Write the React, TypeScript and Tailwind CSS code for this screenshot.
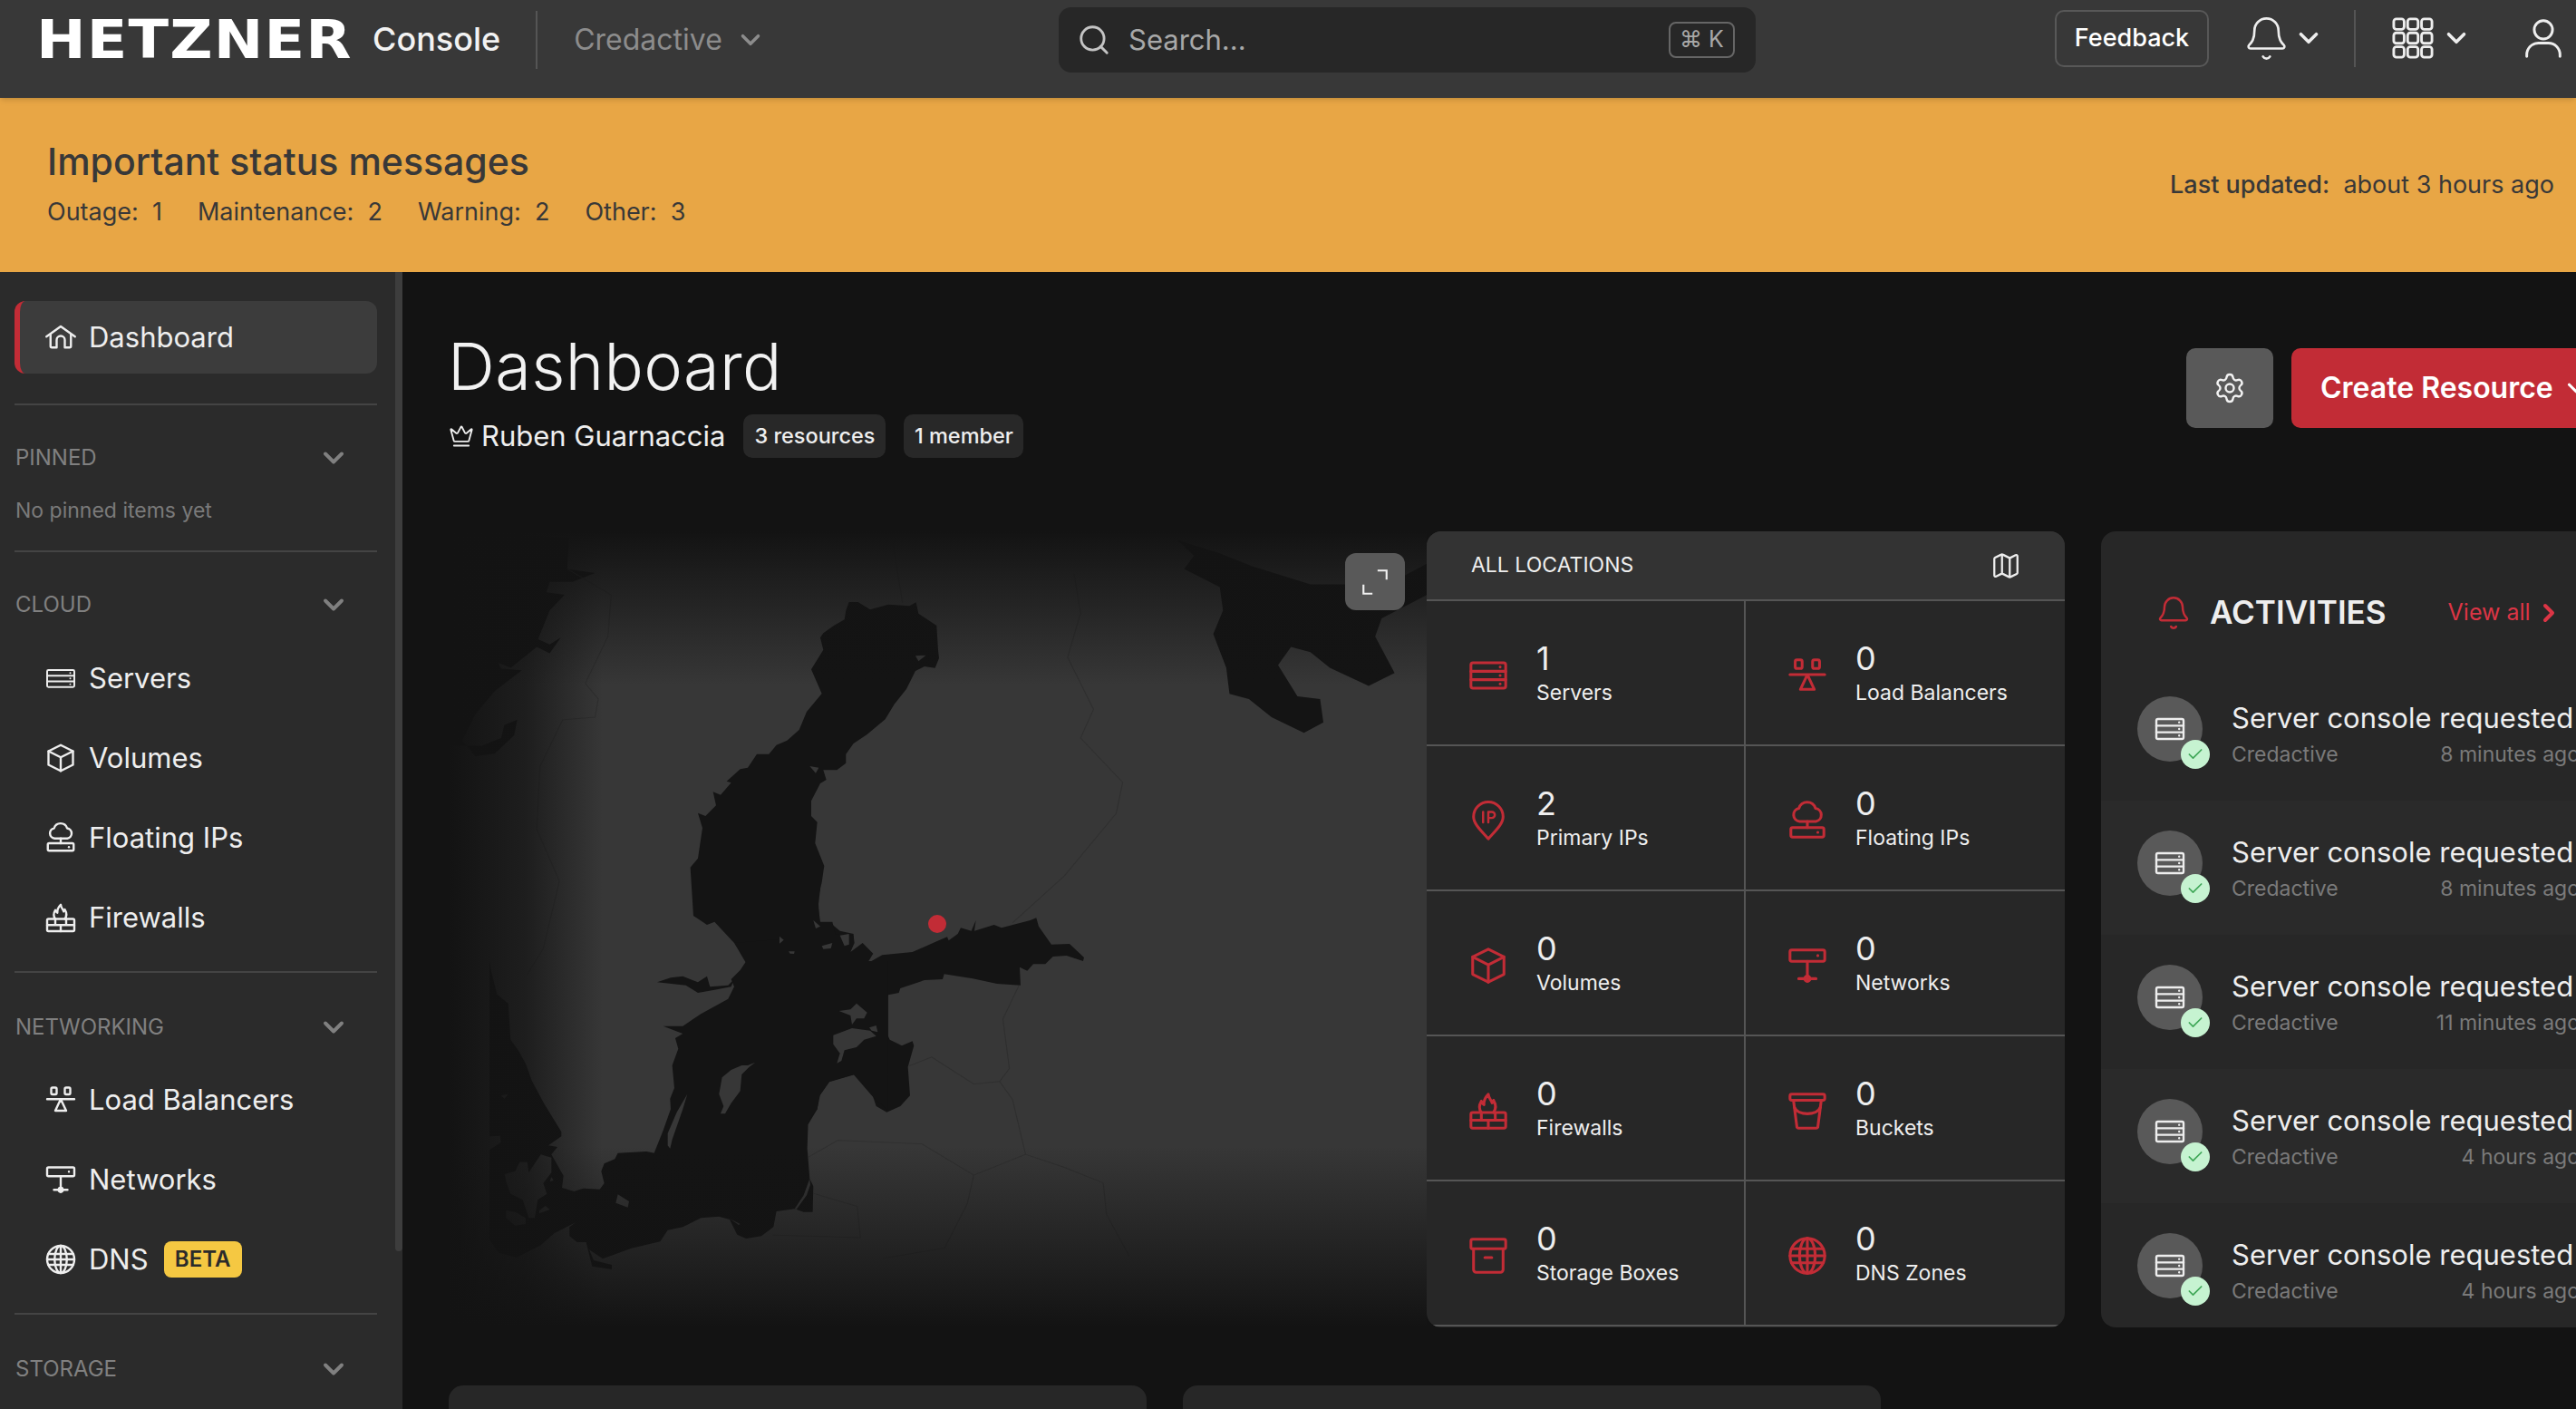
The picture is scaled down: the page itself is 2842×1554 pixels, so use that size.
import { Bell, Check, ChevronDown, ChevronRight, Crown, Map as MapIcon, Search, Settings } from "lucide-react";

type IconProps = { className?: string };

const strokeProps = {
  viewBox: "0 0 24 24",
  fill: "none",
  stroke: "currentColor",
  strokeWidth: 1.6,
  strokeLinecap: "round" as const,
  strokeLinejoin: "round" as const,
};

function ServerIcon({ className }: IconProps) {
  return (
    <svg {...strokeProps} className={className}>
      <rect x="2" y="4.700" width="20" height="14.600" rx="1.200" />
      <path d="M2 9.600h20M2 14.400h20M18.800 7.100h.01M18.800 12h.01M18.800 16.800h.01" />
    </svg>
  );
}

function WideServerIcon({ className }: IconProps) {
  return (
    <svg {...strokeProps} strokeWidth={1.3} className={className}>
      <rect x="2" y="6" width="20" height="12.500" rx="1" />
      <path d="M2 10.200h20M2 14.300h20M19 8.100h.01M19 12.200h.01M19 16.400h.01" />
    </svg>
  );
}

function BoxIcon({ className }: IconProps) {
  return (
    <svg {...strokeProps} className={className}>
      <path d="M12 2.500 21 7v10l-9 4.500L3 17V7z" />
      <path d="M3 7l9 4.500L21 7M12 11.500v10" />
    </svg>
  );
}

function FloatingIcon({ className }: IconProps) {
  return (
    <svg {...strokeProps} className={className}>
      <path d="M7.500 12.500a3.800 3.800 0 0 1-.4-7.500 5 5 0 0 1 9.600 0 3.800 3.800 0 0 1 .2 7.500z" />
      <path d="M12 12.500v3.500" />
      <rect x="2.500" y="16" width="19" height="5.500" rx="1" />
      <path d="M18 18.800h.01" />
    </svg>
  );
}

function FirewallIcon({ className }: IconProps) {
  return (
    <svg {...strokeProps} className={className}>
      <rect x="2" y="13" width="20" height="9" rx="1" />
      <path d="M2 17.500h20M8 13v4.500M16 13v4.500M12 17.500V22" />
      <path d="M8 13c-1.500-2-1.500-4 0-6.500.3 1 .8 1.700 1.500 2C9.300 6 10.500 4 12 2.500c.2 2.500 1.500 3 2.200 5 .3-.5.6-1 .8-1.500 1.500 2.500 1.500 5 0 7" />
    </svg>
  );
}

function BalancerIcon({ className }: IconProps) {
  return (
    <svg {...strokeProps} className={className}>
      <rect x="5" y="3" width="4" height="5" rx="1" />
      <rect x="15" y="3" width="4" height="5" rx="1" />
      <path d="M2 11.500h20M12 11.500l-4 8.500h8z" />
    </svg>
  );
}

function NetworkIcon({ className }: IconProps) {
  return (
    <svg {...strokeProps} className={className}>
      <rect x="2" y="3" width="20" height="6.500" rx="1" />
      <path d="M18 6.200h.01M12 9.500V21M7 19.500h3.500M13.500 19.500H17" />
      <circle cx="12" cy="19.500" r="1.500" />
    </svg>
  );
}

function GlobeGridIcon({ className }: IconProps) {
  return (
    <svg {...strokeProps} className={className}>
      <circle cx="12" cy="12" r="10" />
      <ellipse cx="12" cy="12" rx="4.500" ry="10" />
      <path d="M12 2v20M2.800 8h18.400M2 12h20M2.800 16h18.400" />
    </svg>
  );
}

function PinIpIcon({ className }: IconProps) {
  return (
    <svg {...strokeProps} className={className}>
      <path d="M12 22.500C8 18 3.500 14 3.500 9.800a8.500 8.500 0 0 1 17 0C20.500 14 16 18 12 22.500z" />
      <path d="M9 7v6M12 13V7h2a1.700 1.700 0 0 1 0 3.500h-2" strokeWidth="1.300" />
    </svg>
  );
}

function BucketIcon({ className }: IconProps) {
  return (
    <svg {...strokeProps} className={className}>
      <rect x="2" y="2.500" width="20" height="3.500" rx="1" />
      <path d="M4 6l2 15.500a1 1 0 0 0 1 .500h10a1 1 0 0 0 1-.500L20 6" />
      <path d="M4.500 10c2 5 13 5 15 0" />
    </svg>
  );
}

function ArchiveIcon({ className }: IconProps) {
  return (
    <svg {...strokeProps} className={className}>
      <rect x="2" y="2.500" width="20" height="5.500" rx="1" />
      <path d="M3.500 8v12a1.500 1.500 0 0 0 1.500 1.500h14a1.500 1.500 0 0 0 1.500-1.500V8M10 13h4" />
    </svg>
  );
}

function HouseIcon({ className }: IconProps) {
  return (
    <svg {...strokeProps} className={className}>
      <path d="M1.500 11.500 12 4l10.500 7.500" />
      <path d="M4.500 10v8.500a1 1 0 0 0 1 1h3.500V14a3 3 0 0 1 6 0v5.500h3.500a1 1 0 0 0 1-1V10" />
    </svg>
  );
}

function ExpandIcon({ className }: IconProps) {
  return (
    <svg viewBox="0 0 24 24" fill="none" stroke="currentColor" strokeWidth="1.500" className={className}>
      <path d="M14 3h7v7M3 14v7h7" />
    </svg>
  );
}

function AppsIcon({ className }: IconProps) {
  const cells = [1, 9, 17].flatMap((y) => [1, 9, 17].map((x) => ({ x, y })));
  return (
    <svg viewBox="0 0 24 24" fill="none" stroke="currentColor" strokeWidth="1.500" className={className}>
      {cells.map((c) => (
        <rect key={`${c.x}-${c.y}`} x={c.x} y={c.y} width="6" height="6" rx="1.500" />
      ))}
    </svg>
  );
}

function UserIcon({ className }: IconProps) {
  return (
    <svg {...strokeProps} className={className}>
      <circle cx="12" cy="7" r="5.500" />
      <path d="M2 23v-1a7 7 0 0 1 7-7h6a7 7 0 0 1 7 7v1" />
    </svg>
  );
}

// Baltic sea and coastlines, traced by hand in pieces, each group in its own traced scale
function BalticMap() {
  const north = "translate(720 640) scale(0.3333)";
  const gulf = "translate(860 980) scale(0.3333)";
  const south = "translate(540 1060) scale(0.3333)";
  const rough = "translate(460 570) scale(0.7143 0.574)";
  return (
    <svg viewBox="495 586 1079 878" className="h-full w-full">
      <g fill="#141414">
        <path transform={north} d="M640,100 650,72 680,72 720,97 780,80 850,85 872,73 880,110 940,150 945,230 948,258 935,290 900,285 870,300 840,360 800,410 770,460 710,510 665,540 640,575 640,605 610,628 565,628 575,660 555,672 525,730 525,780 545,800 538,870 568,945 560,1000 548,1050 552,1130 590,1135 620,1160 665,1170 665,1200 270,1200 205,1130 180,1140 135,1110 125,950 150,920 165,820 150,770 175,780 210,745 200,700 225,710 260,670 245,665 290,625 315,620 345,575 385,575 410,545 445,530 485,495 510,435 560,375 525,295 565,230 555,190 565,175 600,150 635,130 Z" />
        <path d="M810,1040 823,1062 870,1062 870,1035 Z" />
        <path transform={gulf} d="M0,0 135,0 128,60 135,110 175,110 185,150 245,155 248,180 235,210 275,180 310,215 290,248 340,220 440,210 520,175 555,160 560,172 590,150 600,130 635,140 650,105 645,140 710,120 735,130 830,105 850,97 858,125 900,185 960,183 1008,228 1005,240 950,222 905,225 880,250 840,250 820,272 795,260 798,320 720,315 640,298 545,283 540,300 480,303 400,330 395,345 345,355 335,400 350,435 345,455 365,500 405,520 440,505 445,520 425,590 432,685 400,720 355,740 320,720 305,675 250,615 165,640 130,690 125,730 95,780 0,780 Z" />
        <path transform={south} d="M850,0 1320,0 1320,495 1270,450 1205,375 1125,398 1095,440 1085,490 1055,530 1052,620 1060,720 1072,745 1070,830 1040,830 1010,820 950,828 940,880 900,910 850,918 820,905 795,855 760,845 700,850 640,880 590,890 565,928 470,950 375,985 330,955 345,990 405,1005 405,1020 340,1010 320,930 290,930 265,910 265,880 285,865 215,900 170,940 90,980 30,965 0,920 0,0 5,30 25,110 62,140 70,260 95,295 120,340 140,395 180,470 238,565 238,580 195,610 225,615 205,640 245,710 240,750 280,762 310,752 365,755 380,735 370,695 380,670 415,655 425,635 520,630 545,635 575,560 600,490 598,455 612,420 605,345 625,290 615,255 640,240 575,215 640,215 700,175 790,125 810,85 800,60 830,30 Z" />
        <path transform={south} d="M555,70 600,55 640,50 690,70 720,50 730,85 790,80 810,60 800,85 745,95 690,105 650,80 Z" />
        <path transform={rough} d="M49,28 L235,40 232,100 275,108 240,125 205,125 200,145 228,150 205,180 187,235 205,245 222,232 205,262 185,250 165,270 145,290 125,280 130,292 162,295 120,335 90,380 70,430 90,460 120,455 150,420 155,390 135,400 130,425 100,440 60,440 49,440 Z" />
        <path transform={rough} d="M1175,45 L1200,75 1185,100 1240,135 1245,180 1230,225 1250,290 1255,340 1285,350 1320,385 1370,415 1400,395 1395,350 1360,345 1330,285 1350,250 1380,260 1410,290 1470,325 1510,300 1480,230 1490,195 1560,150 1560,90 1500,130 1380,130 1290,95 1240,70 Z" />
      </g>
      <g fill="#373737">
        <path transform={north} d="M870,250 905,248 880,268 Z" />
        <path transform={north} d="M520,615 550,620 540,638 Z" />
        <path transform={gulf} d="M178,485 240,462 300,470 320,488 280,500 255,525 215,535 205,570 190,578 200,545 178,515 Z" />
        <path transform={gulf} d="M197,405 235,400 255,380 290,410 280,430 255,430 240,450 235,420 Z" />
        <path transform={gulf} d="M297,460 320,453 325,475 305,470 Z" />
        <path transform={gulf} d="M112,105 135,125 120,132 Z" />
        <path transform={gulf} d="M200,155 230,150 230,185 215,190 Z" />
        <path transform={gulf} d="M140,190 175,180 170,198 145,200 Z" />
        <path transform={gulf} d="M30,208 50,208 48,216 35,215 Z" />
        <path transform={gulf} d="M0,158 14,170 0,182 Z" />
        <path transform={south} d="M835,345 855,345 880,335 860,350 835,375 830,430 800,470 780,505 765,505 775,480 760,440 770,385 800,360 Z" />
        <path transform={south} d="M655,440 640,490 605,590 598,620 590,610 590,570 620,500 Z" />
        <path transform={south} d="M425,772 462,795 458,815 418,800 Z" />
        <path transform={south} d="M50,705 85,695 100,665 125,665 130,700 170,640 205,650 205,700 178,735 190,770 160,790 150,850 130,850 110,790 70,770 55,730 Z" />
        <path transform={south} d="M0,580 35,578 38,600 0,625 Z" />
        <path transform={south} d="M55,825 85,830 120,850 120,870 85,875 55,850 Z" />
        <path transform={south} d="M165,825 185,810 200,822 165,835 Z" />
        <path transform={south} d="M205,715 212,725 200,730 Z" />
        <path transform={south} d="M38,445 62,440 50,455 Z" />
        <path transform={south} d="M1060,720 1040,775 1010,820 1016,822 1050,775 1062,740 Z" />
        <path transform={south} d="M795,852 830,870 825,873 Z" />
      </g>
      <g fill="none" stroke="#2f2f2f" strokeWidth="1.500" transform={rough}>
        <path d="M232,100 L300,150 295,230 260,320 280,350 275,385 225,390 190,480 185,600 220,700 195,830 170,880" />
        <path d="M735,50 L750,165" />
        <path d="M1015,110 L1025,185 1005,270 1045,370 1025,425 1090,510 1080,570 1000,690 920,780" />
        <path d="M760,1055 L795,1038 860,1090 900,1085" />
        <path d="M930,900 L905,965 915,1060 900,1085 920,1120 940,1225" />
        <path d="M605,1230 L650,1198 780,1205 860,1265 940,1225 1000,1250 1060,1280 1065,1340 1100,1420" />
        <path d="M860,1265 L850,1320 815,1405 720,1425" />
        <path d="M612,1300 L680,1325 685,1385 550,1380" />
      </g>
    </svg>
  );
}

function NavItem({ icon: Icon, label, beta }: { icon: (p: IconProps) => React.ReactNode; label: string; beta?: boolean }) {
  return (
    <div className="flex h-[88px] items-center pl-[33px] text-[31px] text-[#eeeeee]">
      <Icon className="h-[36px] w-[36px] shrink-0" />
      <span className="ml-[13px]">{label}</span>
      {beta && (
        <span className="ml-[17px] flex h-[40px] w-[86px] items-center justify-center rounded-[8px] bg-[#f5c842] text-[24px] font-semibold text-[#2b2b2b]">
          BETA
        </span>
      )}
    </div>
  );
}

function SideHeading({ label }: { label: string }) {
  return (
    <div className="flex h-[40px] items-center justify-between pr-[30px] pl-px text-[24px] text-[#808080]">
      <span>{label}</span>
      <ChevronDown className="h-[36px] w-[36px]" strokeWidth={2.6} />
    </div>
  );
}

const resources = [
  { count: "1", label: "Servers", icon: ServerIcon },
  { count: "0", label: "Load Balancers", icon: BalancerIcon },
  { count: "2", label: "Primary IPs", icon: PinIpIcon },
  { count: "0", label: "Floating IPs", icon: FloatingIcon },
  { count: "0", label: "Volumes", icon: BoxIcon },
  { count: "0", label: "Networks", icon: NetworkIcon },
  { count: "0", label: "Firewalls", icon: FirewallIcon },
  { count: "0", label: "Buckets", icon: BucketIcon },
  { count: "0", label: "Storage Boxes", icon: ArchiveIcon },
  { count: "0", label: "DNS Zones", icon: GlobeGridIcon },
];

const activities = ["8 minutes ago", "8 minutes ago", "11 minutes ago", "4 hours ago", "4 hours ago"];

export default function App() {
  return (
    <div className="flex h-screen w-screen flex-col overflow-hidden bg-[#131313] font-['Inter',sans-serif]">
      {/* Top bar */}
      <header className="relative z-10 flex h-[108px] shrink-0 items-start bg-[#383838] shadow-md">
        <div className="ml-[40px] flex h-[88px] items-center">
          <div className="w-[347px] overflow-visible">
            <span className="inline-block origin-left scale-x-[1.126] font-['DejaVu_Sans',sans-serif] text-[58px] leading-none font-bold tracking-[1px] text-white">HETZNER</span>
          </div>
          <span className="-mt-[2px] ml-[24px] text-[36px] font-medium text-[#f2f2f2]">Console</span>
          <div className="ml-[39px] h-[64px] w-[2px] bg-[#555555]" />
          <span className="ml-[40px] text-[32px] text-[#8c8c8c]">Credactive</span>
          <ChevronDown className="ml-[14px] h-[34px] w-[34px] text-[#8c8c8c]" strokeWidth={2.5} />
        </div>
        <div className="absolute top-[8px] left-[1168px] flex h-[72px] w-[769px] items-center rounded-[14px] bg-[#272727] pr-[23px] pl-[20px]">
          <Search className="h-[38px] w-[38px] text-[#c4c4c4]" strokeWidth={1.8} />
          <span className="ml-[19px] text-[31px] text-[#a8a8a8]">Search...</span>
          <span className="ml-auto flex h-[40px] w-[73px] items-center justify-center rounded-[8px] border-2 border-[#666666] text-[25px] text-[#a8a8a8]">⌘ K</span>
        </div>
        <div className="ml-auto flex h-[84px] items-center pr-[14px] text-[#eeeeee]">
          <div className="flex h-[63px] w-[170px] items-center justify-center rounded-[10px] border-2 border-[#585858] text-[27px] font-medium text-white">Feedback</div>
          <Bell className="ml-[37px] h-[53px] w-[53px]" strokeWidth={1.2} />
          <ChevronDown className="ml-[3px] h-[34px] w-[34px]" strokeWidth={2.5} />
          <div className="mr-[40px] ml-[33px] h-[63px] w-[2px] bg-[#555555]" />
          <AppsIcon className="h-[46px] w-[46px]" />
          <ChevronDown className="ml-[8px] h-[34px] w-[34px]" strokeWidth={2.5} />
          <UserIcon className="ml-[57px] h-[44px] w-[44px]" />
        </div>
      </header>

      {/* Status banner */}
      <section className="flex h-[192px] shrink-0 items-center justify-between bg-[#e8a645] pr-[24px] pl-[52px] text-[#383838]">
        <div className="pb-[6px]">
          <div className="text-[41px] leading-[56px] font-medium">Important status messages</div>
          <div className="mt-[10px] flex gap-[39px] text-[27px] leading-[36px]">
            <span>Outage:&nbsp; 1</span>
            <span>Maintenance:&nbsp; 2</span>
            <span>Warning:&nbsp; 2</span>
            <span>Other:&nbsp; 3</span>
          </div>
        </div>
        <div className="text-[27px]">
          <span className="font-medium">Last updated:</span>&nbsp; about 3 hours ago
        </div>
      </section>

      <div className="flex min-h-0 flex-1">
        {/* Sidebar */}
        <aside className="relative w-[444px] shrink-0 overflow-hidden bg-[#2b2b2b] pt-[32px] pr-[28px] pl-[16px]">
          <div className="absolute top-0 right-0 h-[1080px] w-[8px] rounded-b-[4px] bg-[#3d3d3d]" />
          <div className="flex h-[80px] items-center overflow-hidden rounded-[12px] border-l-[6px] border-[#c22c36] bg-[#3c3c3c] pl-[27px] text-[31px] text-[#eeeeee]">
            <HouseIcon className="h-[36px] w-[36px]" />
            <span className="ml-[13px]">Dashboard</span>
          </div>
          <div className="mt-[33px] mb-[38px] h-[2px] bg-[#444444]" />
          <SideHeading label="PINNED" />
          <div className="mt-[20px] pl-px text-[23px] leading-[36px] text-[#7a7a7a]">No pinned items yet</div>
          <div className="mt-[26px] mb-[38px] h-[2px] bg-[#444444]" />
          <SideHeading label="CLOUD" />
          <div className="mt-[17px]">
            <NavItem icon={WideServerIcon} label="Servers" />
            <NavItem icon={BoxIcon} label="Volumes" />
            <NavItem icon={FloatingIcon} label="Floating IPs" />
            <NavItem icon={FirewallIcon} label="Firewalls" />
          </div>
          <div className="mt-[15px] mb-[40px] h-[2px] bg-[#444444]" />
          <SideHeading label="NETWORKING" />
          <div className="mt-[16px]">
            <NavItem icon={BalancerIcon} label="Load Balancers" />
            <NavItem icon={NetworkIcon} label="Networks" />
            <NavItem icon={GlobeGridIcon} label="DNS" beta />
          </div>
          <div className="mt-[15px] mb-[40px] h-[2px] bg-[#444444]" />
          <SideHeading label="STORAGE" />
        </aside>

        {/* Main content */}
        <main className="min-w-0 flex-1 overflow-hidden pt-[60px] pl-[51px]">
          <div className="w-[2405px]">
            <div className="flex h-[226px] items-start justify-between">
              <div>
                <h1 className="-ml-px text-[72px] leading-[88px] font-light tracking-[0.4px] text-[#f2f2f2]">Dashboard</h1>
                <div className="mt-[9px] flex items-center text-[31px] text-[#eeeeee]">
                  <Crown className="h-[28px] w-[28px]" strokeWidth={1.6} />
                  <span className="ml-[8px]">Ruben Guarnaccia</span>
                  <span className="ml-[20px] flex h-[48px] w-[157px] items-center justify-center rounded-[10px] bg-[#282828] text-[23.5px] font-medium">3 resources</span>
                  <span className="ml-[20px] flex h-[48px] w-[132px] items-center justify-center rounded-[10px] bg-[#282828] text-[23.5px] font-medium">1 member</span>
                </div>
              </div>
              <div className="mt-[24px] flex gap-[20px]">
                <div className="flex h-[88px] w-[96px] items-center justify-center rounded-[10px] bg-[#595959] text-[#f2f2f2]">
                  <Settings className="h-[36px] w-[36px]" strokeWidth={1.6} />
                </div>
                <div className="flex h-[88px] w-[372px] items-center rounded-[10px] bg-[#c22c36] pl-[32px] text-[32px] font-semibold text-white">
                  Create Resource
                  <ChevronDown className="ml-[10px] h-[30px] w-[30px]" strokeWidth={2.5} />
                </div>
              </div>
            </div>

            <div className="flex gap-[40px]">
              {/* Map with the location card on top of its right edge */}
              <div className="relative h-[878px] w-[1079px] shrink-0 bg-[#373737]">
                <BalticMap />
                <div className="absolute inset-y-0 left-0 w-[170px] bg-linear-to-r from-[#131313] via-[#131313]/70 to-transparent" />
                <div className="absolute inset-x-0 top-0 h-[170px] bg-linear-to-b from-[#131313] to-transparent" />
                <div className="absolute inset-x-0 bottom-0 h-[200px] bg-linear-to-t from-[#131313] to-transparent" />
                <div className="absolute top-[423px] left-[529px] h-[20px] w-[20px] rounded-full bg-[#c22c36]" />
                <div className="absolute top-[24px] left-[989px] flex h-[63px] w-[66px] items-center justify-center rounded-[12px] bg-[#595959] text-[#f2f2f2]">
                  <ExpandIcon className="h-[34px] w-[34px]" />
                </div>
              </div>

              {/* Resource counts */}
              <div className="-ml-[40px] h-[878px] w-[704px] shrink-0 overflow-hidden rounded-[16px] bg-[#272727] text-[#eeeeee]">
                <div className="flex h-[77px] items-center justify-between border-b-2 border-[#555555] bg-[#333333] pr-[48px] pl-[49px] text-[23px]">
                  <span>ALL LOCATIONS</span>
                  <MapIcon className="h-[34px] w-[34px]" strokeWidth={1.6} />
                </div>
                <div className="grid grid-cols-2">
                  {resources.map((r, i) => (
                    <div key={r.label} className={`flex h-[160px] items-center border-b-2 border-[#555555] pl-[45px] ${i % 2 === 0 ? "border-r-2" : ""}`}>
                      <r.icon className="mt-[6px] h-[46px] w-[46px] shrink-0 text-[#c22c36]" />
                      <div className="ml-[30px]">
                        <div className="text-[36px] leading-[44px]">{r.count}</div>
                        <div className="text-[23px] leading-[32px]">{r.label}</div>
                      </div>
                    </div>
                  ))}
                </div>
              </div>

              {/* Activities */}
              <div className="h-[878px] w-[582px] shrink-0 overflow-hidden rounded-[16px] bg-[#272727]">
                <div className="flex h-[149px] items-center pt-[30px] pl-[60px]">
                  <Bell className="h-[40px] w-[40px] text-[#c22c36]" strokeWidth={1.5} />
                  <span className="ml-[20px] text-[35px] font-semibold text-[#eeeeee]">ACTIVITIES</span>
                  <span className="ml-[68px] text-[25px] text-[#dc3545]">View all</span>
                  <ChevronRight className="ml-[4px] h-[32px] w-[32px] text-[#dc3545]" strokeWidth={3} />
                </div>
                {activities.map((time, i) => (
                  <div key={i} className={`flex h-[148px] pt-[33px] pr-[54px] pl-[40px] ${i % 2 === 1 ? "bg-[#2a2a2a]" : ""}`}>
                    <div className="relative flex h-[72px] w-[72px] shrink-0 items-center justify-center rounded-full bg-[#595959] text-[#eeeeee]">
                      <ServerIcon className="h-[36px] w-[36px]" />
                      <div className="absolute -right-[8px] -bottom-[8px] flex h-[32px] w-[32px] items-center justify-center rounded-full bg-[#c6f3d1] text-[#3fa757]">
                        <Check className="h-[20px] w-[20px]" strokeWidth={2} />
                      </div>
                    </div>
                    <div className="ml-[32px] flex-1 pt-[4px]">
                      <div className="text-[31px] leading-[40px] whitespace-nowrap text-[#eeeeee]">Server console requested</div>
                      <div className="mt-[4px] flex justify-between text-[23px] leading-[32px] text-[#7a7a7a]">
                        <span>Credactive</span>
                        <span>{time}</span>
                      </div>
                    </div>
                  </div>
                ))}
              </div>
            </div>

            <div className="mt-[64px] flex gap-[40px]">
              <div className="h-[60px] w-[770px] rounded-t-[16px] bg-[#272727]" />
              <div className="h-[60px] w-[770px] rounded-t-[16px] bg-[#272727]" />
            </div>
          </div>
        </main>
      </div>
    </div>
  );
}
